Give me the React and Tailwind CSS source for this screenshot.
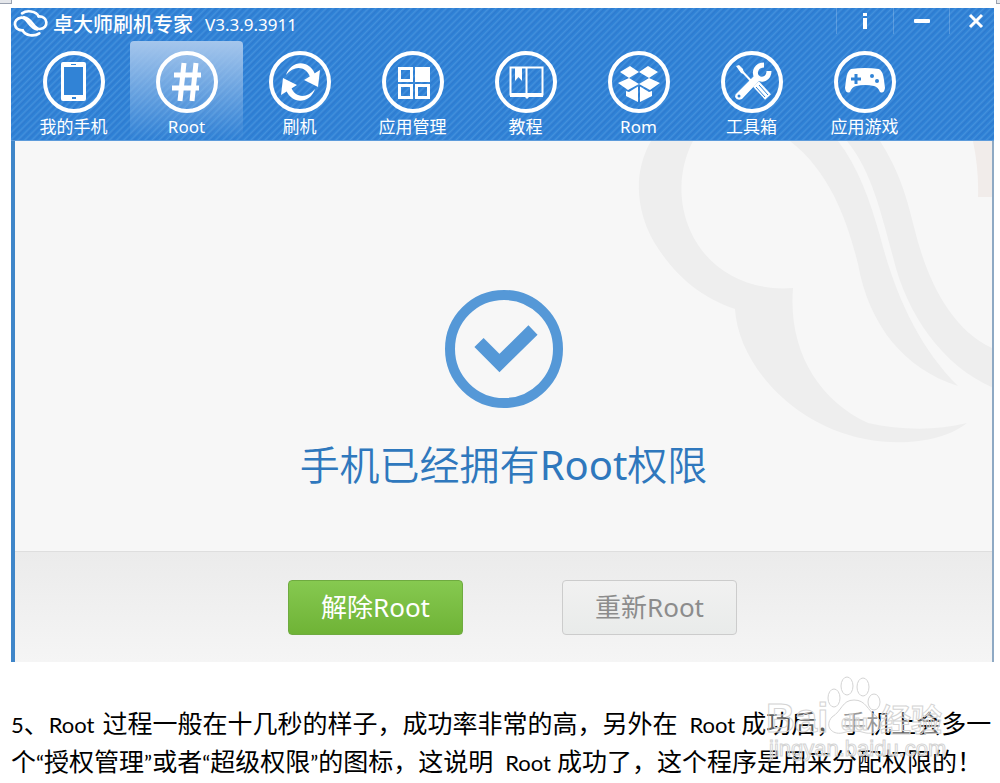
import React from "react";

const navItems = [
  { label: "我的手机", icon: PhoneIcon },
  { label: "Root", icon: HashIcon, active: true },
  { label: "刷机", icon: SyncIcon },
  { label: "应用管理", icon: GridIcon },
  { label: "教程", icon: BookIcon },
  { label: "Rom", icon: BoxIcon },
  { label: "工具箱", icon: ToolsIcon },
  { label: "应用游戏", icon: GamepadIcon },
];

const App = () => {
  return (
    <div className="min-h-screen overflow-hidden bg-white font-['Noto_Sans','Noto_Sans_CJK_SC',sans-serif]">
      {/* Corner handles */}
      <div className="flex h-2 justify-between pb-1">
        <div className="w-3 border-r border-b border-gray-400 bg-gray-200" />
        <div className="w-1 border-b border-l border-gray-400 bg-gray-200" />
      </div>

      {/* App window */}
      <div className="mr-[6px] ml-[11px] border-r-2 border-l-4 border-[#3f86c9] border-r-[#8ea9c4]">
        <Header />
        <main className="relative h-[410px] overflow-hidden bg-[#f7f7f7]">
          <Watermark />
          <div className="relative flex flex-col items-center pt-[149px]">
            <svg className="size-[118px]" viewBox="0 0 118 118" fill="none" stroke="#5598d7">
              <circle cx="59" cy="59" r="54" strokeWidth="10" />
              <path d="M34 52.500L54.500 73L88 40" strokeWidth="13" />
            </svg>
            <h1 className="mt-7 text-[40px] leading-[58px] font-[350] text-[#2f78bd]">
              手机已经拥有<span className="font-normal">Root</span>权限
            </h1>
          </div>
        </main>
        <Actions />
      </div>

      <Description />
    </div>
  );
};

/* ---------------- Header ---------------- */

const Header = () => {
  return (
    <header className="-mr-0.5 -ml-1 h-[133px] border-b border-[#5d9bdb] bg-[#3183d6] bg-[repeating-linear-gradient(135deg,#2d7bd0_0px,#3084d8_2px,#4390dc_3px,#2d7bd0_5px)] pl-[6px] text-white">
      <div className="flex h-[33px] items-start justify-between">
        <div className="flex items-center">
          <svg className="-ml-1 h-[33px] w-[36px]" viewBox="39 24 108 99" fill="none" stroke="white" strokeWidth="8" strokeLinecap="round">
            <path d="M68 91C40 92 36 56 64 53C84 52 86 84 112 88" />
            <path d="M116 49C144 48 148 84 120 87C100 88 98 56 72 52" />
            <path d="M68 91C76 108 104 110 118 100" />
            <path d="M116 49C108 32 80 30 66 40" />
          </svg>
          <span className="ml-1 text-[20px] leading-[33px] font-medium">卓大师刷机专家</span>
          <span className="ml-3 text-[17px] leading-[33px]">V3.3.9.3911</span>
        </div>
        <div className="flex h-[26px]">
          <button className="flex w-[57px] items-center justify-center border-l border-white/20" aria-label="关于">
            <svg width="6" height="16" fill="white">
              <path d="M1 0h4v3H1zM1 5h4v11H1z" />
            </svg>
          </button>
          <button className="flex w-[56px] items-center justify-center border-l border-white/20" aria-label="最小化">
            <svg width="16" height="4" fill="white">
              <rect width="16" height="4" rx="1" />
            </svg>
          </button>
          <button className="flex w-[45px] items-center justify-center border-l border-white/20 pl-2" aria-label="关闭">
            <svg width="16" height="16" stroke="white" strokeWidth="3">
              <path d="M2 2l12 12M14 2L2 14" />
            </svg>
          </button>
        </div>
      </div>
      <nav className="flex">
        {navItems.map((item) => (
          <NavButton key={item.label} item={item} />
        ))}
      </nav>
    </header>
  );
};

const NavButton = ({ item }) => {
  const Icon = item.icon;
  return (
    <button
      className={
        item.active
          ? "flex h-[99px] w-[113px] shrink-0 flex-col items-center rounded-t bg-linear-to-b from-[#a5c6ec] to-[#a5c6ec]/0 pt-[10px]"
          : "flex h-[99px] w-[113px] shrink-0 flex-col items-center pt-[10px]"
      }
    >
      <svg className="size-[62px] shrink-0" viewBox="0 0 62 62" fill="none">
        <circle cx="31" cy="31" r="29" stroke="white" strokeWidth="4" />
        <Icon />
      </svg>
      <span className="text-[17px] leading-[28px]">{item.label}</span>
    </button>
  );
};

/* ---------------- Icons ---------------- */

function PhoneIcon() {
  return (
    <>
      <rect x="18" y="11" width="25" height="39" rx="2" fill="white" />
      <path d="M21 16h19v28H21zM28 13h5v1h-5zM29 46h4v2h-4z" fill="#3183d6" />
    </>
  );
}

function HashIcon() {
  return <path d="M28 12l-4 38M40 12l-4 38M18 24h27M16 37h27" stroke="white" strokeWidth="5" />;
}

function SyncIcon() {
  return (
    <>
      <path d="M17 24C22 9 40 8 46 23L41 26C37 15 25 14 17 24z" fill="white" />
      <path d="M46 38C41 53 23 54 17 39L22 36C26 47 38 48 46 38z" fill="white" />
      <path d="M51 19L49 36L35 29zM12 44L14 27L28 34z" fill="white" />
    </>
  );
}

function GridIcon() {
  return (
    <>
      <path d="M17.500 17.500h12v12h-12zM17.500 34.500h12v12h-12zM34.500 34.500h12v12h-12z" stroke="white" strokeWidth="3" />
      <rect x="33" y="16" width="15" height="15" fill="white" />
    </>
  );
}

function BookIcon() {
  return (
    <>
      <path d="M15.500 16.500h32v27h-32zM31.500 16v27" stroke="white" strokeWidth="2" />
      <path d="M15 42h33v4H34l-2 2l-2-2H15zM20 16h7v14l-3.500-4L20 30z" fill="white" />
    </>
  );
}

function BoxIcon() {
  return (
    <path
      d="M22 15L31 21L21 27L12 21zM40 15L31 21L41 27L50 21zM21 27L31 33L20 39L10 32zM41 27L31 33L42 39L52 32zM18 40l3 1l9-5.500v15.500L18 45zM44 40l-3 1l-9-5.500v15.500L44 45z"
      fill="white"
    />
  );
}

function ToolsIcon() {
  return (
    <>
      <path d="M19 18l13 14" stroke="white" strokeWidth="2" />
      <path d="M15 15l3-1l4 4l1 5l-3-1z" fill="white" />
      <path d="M33 25L38 30L21 48Q16 50 14 46Q14 43 16 42z" fill="white" />
      <path d="M43 14C36 14 32 21 36 26C41 31 48 27 48 20" stroke="white" strokeWidth="5" />
      <circle cx="18" cy="45" r="1.500" fill="#3183d6" />
      <path d="M35 33l12 13" stroke="white" strokeWidth="8" />
      <path d="M35 36l9 10M38 34l9 10" stroke="#3183d6" strokeWidth="1" />
    </>
  );
}

function GamepadIcon() {
  return (
    <>
      <path
        d="M17 18Q31 16 45 18Q49 20 50 29L51 37Q50 43 46 41Q44 36 40 35Q31 33 22 35Q18 36 16 41Q12 43 11 37L12 29Q13 20 17 18z"
        fill="white"
      />
      <path d="M22 23v10M17 28h10" stroke="#3183d6" strokeWidth="3" />
      <circle cx="38" cy="25" r="2" fill="#3183d6" />
      <circle cx="43" cy="30" r="2" fill="#3183d6" />
    </>
  );
}

/* ---------------- Background logo ---------------- */

const Watermark = () => {
  return (
    <svg className="absolute top-0 right-0 h-[411px] w-[360px]" viewBox="632 141 360 411" fill="#eeeeee">
      <path d="M651 141C632 174 637 212 654 242C675 276 700 297 735 309C738 362 790 424 865 439C905 447 946 440 967 423C935 431 900 430 868 423C818 400 788 350 793 288C749 292 707 270 690 230C675 195 682 162 693 141z" />
      <path d="M790 141C830 172 847 220 858 264C869 326 905 369 958 386C918 346 895 294 880 236C870 200 858 167 838 141z" />
      <path d="M847 141C872 172 881 213 893 257C907 316 944 367 994 388V349C950 330 926 277 914 227C904 185 895 165 880 141z" />
      <path d="M973 141Q979 170 978 197H994V141z" fill="#f1ecea" />
    </svg>
  );
};

/* ---------------- Actions ---------------- */

const Actions = () => {
  return (
    <div className="flex h-[111px] justify-center gap-[99px] border-t border-[#dedede] bg-linear-to-b from-[#ebebeb] to-[#f5f5f5] pt-7 pl-[18px]">
      <button className="h-[55px] w-[175px] rounded-sm border border-[#6fab40] bg-linear-to-b from-[#86c950] to-[#6fb336] pb-0.5 text-[26px] leading-[50px] text-white">
        解除Root
      </button>
      <button className="h-[55px] w-[175px] rounded-sm border border-[#cccccc] bg-linear-to-b from-[#f1f1f1] to-[#e9ebea] pb-0.5 text-[26px] leading-[50px] text-[#8c8c8c]">
        重新Root
      </button>
    </div>
  );
};

/* ---------------- Description ---------------- */

const Description = () => {
  return (
    <div className="relative mt-[42px] pl-[11px]">
      <p lang="zh-CN" className="text-[25px] leading-[38px] whitespace-nowrap text-black font-['Lato','Noto_Sans_CJK_SC',sans-serif]">
        <Latin>5</Latin>、<span className="mr-2 text-[22px] leading-none">Root</span>过程一般在十几秒的样子&#xFF0C;成功率非常的高&#xFF0C;另外在<Word>Root</Word>成功后&#xFF0C;手机上会多一
        <br />
        个<Latin>“</Latin>授权管理<Latin>”</Latin>或者<Latin>“</Latin>超级权限<Latin>”</Latin>的图标&#xFF0C;这说明<Word>Root</Word>成功了&#xFF0C;这个程序是用来分配权限的&#xFF01;
      </p>

      {/* Site mark over the text */}
      <div className="absolute -top-7 right-[44px] h-[110px] w-[190px]">
        <svg className="size-full" viewBox="0 0 190 110" fill="white" fillOpacity="0.6" stroke="#d4d4d4">
          <ellipse cx="68" cy="22" rx="6" ry="9" />
          <ellipse cx="81" cy="10" rx="6" ry="9" />
          <ellipse cx="97" cy="11" rx="6" ry="9" />
          <ellipse cx="108" cy="26" rx="6" ry="8" />
          <path d="M88 24C76 24 76 35 66 41C58 50 66 59 76 57Q88 53 100 57C112 59 120 49 111 41C101 34 100 24 88 24z" />
          <g className="font-['Liberation_Sans','Noto_Sans_CJK_SC',sans-serif]" fillOpacity="0.4">
            <text x="0" y="56" fontSize="40" fontWeight="bold">Bai</text>
            <text x="75" y="54" fontSize="22" fontWeight="bold">du</text>
            <text x="114" y="55" fontSize="31" fontWeight="bold">经验</text>
            <text x="3" y="80" fontSize="22">jingyan.baidu.com</text>
          </g>
        </svg>
      </div>
    </div>
  );
};

const Latin = ({ children }) => <span className="text-[22px] leading-none">{children}</span>;

const Word = ({ children }) => <span className="mr-1.5 ml-3 text-[22px] leading-none">{children}</span>;

export default App;
